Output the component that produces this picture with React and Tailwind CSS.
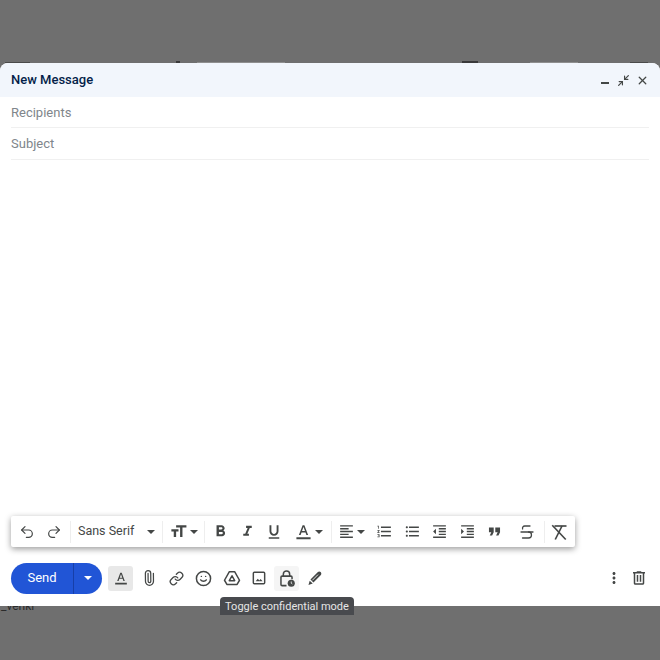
import React from "react";
import { Undo2, Redo2, Strikethrough, Paperclip, Link, Smile, Minimize2, X } from "lucide-react";

function Mi({ d, size = 18, className = "" }) {
  return (
    <svg width={size} height={size} viewBox="0 0 24 24" fill="currentColor" className={className}>
      <path d={d} />
    </svg>
  );
}

function Caret() {
  return <span className="w-0 h-0 border-x-[4px] border-x-transparent border-t-[4px] border-t-[#444746]" />;
}

function Divider() {
  return <span className="w-px h-[22px] bg-[#eeeeee]" />;
}

const paths = {
  size: "M9 4v3h5v12h3V7h5V4H9zm-6 8h3v7h3v-7h3V9H3v3z",
  bold: "M15.6 10.79c.97-.67 1.65-1.77 1.65-2.79 0-2.26-1.75-4-4-4H7v14h7.04c2.09 0 3.71-1.7 3.71-3.79 0-1.52-.86-2.82-2.15-3.42zM10 6.5h3c.83 0 1.5.67 1.5 1.5s-.67 1.5-1.5 1.5h-3v-3zm3.5 9H10v-3h3.5c.83 0 1.5.67 1.5 1.5s-.67 1.5-1.5 1.5z",
  italic: "M10 4v3h2.21l-3.42 8H6v3h8v-3h-2.21l3.42-8H18V4z",
  underline: "M12 17c3.31 0 6-2.69 6-6V3h-2.5v8c0 1.93-1.57 3.5-3.5 3.5S8.5 12.93 8.5 11V3H6v8c0 3.31 2.69 6 6 6zm-7 2v2h14v-2H5z",
  color: "M2 20h20v3H2v-3zm3.49-3h2.42l1.27-3.58h5.65L16.09 17h2.42L13.25 3h-2.5L5.49 17zm4.42-5.61 2.03-5.79h.12l2.03 5.79H9.91z",
  align: "M15 15H3v2h12v-2zm0-8H3v2h12V7zM3 13h18v-2H3v2zm0 8h18v-2H3v2zM3 3v2h18V3H3z",
  numbered: "M2 17h2v.5H3v1h1v.5H2v1h3v-4H2v1zm1-9h1V4H2v1h1v3zm-1 3h1.8L2 13.1v.9h3v-1H3.2L5 10.9V10H2v1zm5-6v2h14V5H7zm0 14h14v-2H7v2zm0-6h14v-2H7v2z",
  bulleted: "M4 10.5c-.83 0-1.5.67-1.5 1.5s.67 1.5 1.5 1.5 1.5-.67 1.5-1.5-.67-1.5-1.5-1.5zm0-6c-.83 0-1.5.67-1.5 1.5S3.17 7.5 4 7.5 5.5 6.83 5.5 6 4.83 4.5 4 4.5zm0 12c-.83 0-1.5.68-1.5 1.5s.68 1.5 1.5 1.5 1.5-.68 1.5-1.5-.67-1.5-1.5-1.5zM7 19h14v-2H7v2zm0-6h14v-2H7v2zm0-8v2h14V5H7z",
  outdent: "M11 17h10v-2H11v2zm-8-5l4 4V8l-4 4zm0 9h18v-2H3v2zM3 3v2h18V3H3zm8 6h10V7H11v2zm0 4h10v-2H11v2z",
  indent: "M3 21h18v-2H3v2zM3 8v8l4-4-4-4zm8 9h10v-2H11v2zM3 3v2h18V3H3zm8 6h10V7H11v2zm0 4h10v-2H11v2z",
  quote: "M6 17h3l2-4V7H5v6h3zm8 0h3l2-4V7h-6v6h3z",
  dots: "M12 8c1.1 0 2-.9 2-2s-.9-2-2-2-2 .9-2 2 .9 2 2 2zm0 2c-1.1 0-2 .9-2 2s.9 2 2 2 2-.9 2-2-.9-2-2-2zm0 6c-1.1 0-2 .9-2 2s.9 2 2 2 2-.9 2-2-.9-2-2-2z",
  trash: "M15 4V3H9v1H4v2h1v13c0 1.1.9 2 2 2h10c1.1 0 2-.9 2-2V6h1V4h-5zm2 15H7V6h10v13zM9 8h2v9H9zm4 0h2v9h-2z",
};

function FmtBtn({ children, w = "w-[27.5px]", gap = "gap-[3px]", extra = "" }) {
  return <span className={`${w} ${gap} ${extra} flex justify-center items-center text-[#444746]`}>{children}</span>;
}

function ActionBtn({ children, active }) {
  return (
    <span className="w-[27.7px] flex justify-center text-[#444746]">
      <span className={`w-[25px] h-[25px] flex justify-center items-center rounded-[3px] ${active || ""}`}>
        {children}
      </span>
    </span>
  );
}

export default function App() {
  return (
    <div className="w-[660px] h-[660px] bg-[#6f6f6f] overflow-hidden flex flex-col font-['Roboto',sans-serif]">
      {/* bits of the page behind the dialog, only the lowest pixels show */}
      <div className="h-[63px] shrink-0 flex items-end">
        <span className="ml-[5px] w-[25px] h-[1px] bg-[#4a4a4a]" />
        <span className="ml-[146px] w-[4px] h-[2px] bg-[#3a3a3a]" />
        <span className="ml-[17px] w-[88px] h-[1px] bg-[#8f8f8f]" />
        <span className="ml-[177px] w-[16px] h-[2px] bg-[#3a3a3a]" />
        <span className="ml-[52px] w-[48px] h-[1px] bg-[#8f8f8f]" />
        <span className="ml-[52px] w-[18px] h-[1px] bg-[#4a4a4a]" />
      </div>

      <div className="relative h-[543px] shrink-0 bg-white rounded-t-[8px] flex flex-col">
        <div className="h-[34px] shrink-0 bg-[#f2f6fc] rounded-t-[8px] flex items-center justify-between pl-[11px] pr-[11px]">
          <span className="text-[13px] font-medium text-[#041e49]">New Message</span>
          <div className="flex items-center text-[#444746]">
            <span className="w-[8px] h-[2px] bg-[#444746] mt-[6px] mr-[8px]" />
            <Minimize2 size={13} strokeWidth={2.2} className="mr-[6px]" />
            <X size={13} strokeWidth={2.4} />
          </div>
        </div>

        <div className="mx-[11px] h-[31px] shrink-0 border-b border-[#f0f0f0] flex items-center pt-[2px] text-[13px] text-[#80868b]">
          Recipients
        </div>
        <div className="mx-[11px] h-[32px] shrink-0 border-b border-[#f0f0f0] flex items-center text-[13px] text-[#80868b]">
          Subject
        </div>

        <div className="flex-1" />

        <div className="mx-[11px] w-[564px] h-[31px] shrink-0 bg-white rounded-[2px] shadow-[0_2px_6px_rgba(0,0,0,0.4)] flex items-center pl-[2px]">
          <FmtBtn><Undo2 size={16} strokeWidth={1.8} /></FmtBtn>
          <FmtBtn extra="mr-[2px]"><Redo2 size={16} strokeWidth={1.8} /></FmtBtn>
          <Divider />
          <span className="w-[91px] flex items-center justify-between px-[7px] text-[12.5px] text-[#444746]">
            Sans Serif
            <Caret />
          </span>
          <Divider />
          <FmtBtn w="w-[41px]" gap="gap-[2.5px]"><Mi d={paths.size} size={19} /><Caret /></FmtBtn>
          <Divider />
          <FmtBtn w="w-[27px]" extra="ml-[1.5px]"><Mi d={paths.bold} size={19} /></FmtBtn>
          <FmtBtn w="w-[27px]"><Mi d={paths.italic} size={17} /></FmtBtn>
          <FmtBtn w="w-[27px]"><Mi d={paths.underline} size={18} /></FmtBtn>
          <FmtBtn w="w-[43px]" gap="gap-[3.5px]"><Mi d={paths.color} size={17} /><Caret /></FmtBtn>
          <Divider />
          <FmtBtn w="w-[39.5px]" gap="gap-[2.5px]"><Mi d={paths.align} size={17} /><Caret /></FmtBtn>
          <FmtBtn><Mi d={paths.numbered} size={17} /></FmtBtn>
          <FmtBtn><Mi d={paths.bulleted} size={17} /></FmtBtn>
          <FmtBtn><Mi d={paths.outdent} size={17} /></FmtBtn>
          <FmtBtn><Mi d={paths.indent} size={17} /></FmtBtn>
          <FmtBtn><Mi d={paths.quote} size={19} /></FmtBtn>
          <FmtBtn w="w-[35px]" extra="pl-[1px]"><Strikethrough size={18} strokeWidth={1.7} /></FmtBtn>
          <Divider />
          <FmtBtn w="w-[30px]" extra="pr-[1px]">
            <svg width="18" height="18" viewBox="0 0 24 24" fill="none" stroke="currentColor" strokeWidth="2.2">
              <path d="M6 4h16" />
              <path d="M16 4 7 22" />
              <path d="M3 3l18 19" />
            </svg>
          </FmtBtn>
        </div>

        <div className="h-[59px] shrink-0 flex items-center pl-[11px] pr-[12px] pt-[3px]">
          <div className="w-[91px] h-[31px] rounded-full bg-[#2155d6] flex items-center text-white">
            <span className="w-[62px] text-center text-[13px]">Send</span>
            <span className="w-px h-full bg-[#173fa8]" />
            <span className="flex-1 flex justify-center">
              <span className="w-0 h-0 border-x-[4px] border-x-transparent border-t-[4px] border-t-white" />
            </span>
          </div>

          <div className="ml-[5px] flex items-center">
            <ActionBtn active="bg-[#e8e8e8]"><Mi d={paths.color} size={14} /></ActionBtn>
            <ActionBtn><Paperclip size={16} strokeWidth={1.9} className="rotate-[-45deg]" /></ActionBtn>
            <ActionBtn><Link size={15} strokeWidth={2.1} /></ActionBtn>
            <ActionBtn><Smile size={17} strokeWidth={2.1} /></ActionBtn>
            <ActionBtn>
              <svg width="18" height="18" viewBox="0 0 24 24" fill="none" stroke="currentColor" strokeWidth="2" strokeLinejoin="round">
                <path d="M8.500 3.500h7L22 15l-3.200 5.500H5.200L2 15z" />
                <path d="M12 9l3.600 6.500H8.400z" />
              </svg>
            </ActionBtn>
            <ActionBtn>
              <svg width="16" height="16" viewBox="0 0 24 24" fill="none" stroke="currentColor" strokeWidth="2.2">
                <rect x="3.500" y="3.500" width="17" height="17" rx="1.500" />
                <path d="M7 17l3.200-4 2.300 2.600 1.800-2.100L17.500 17z" fill="currentColor" stroke="none" />
              </svg>
            </ActionBtn>
            <ActionBtn active="bg-[#f5f5f5]">
              <svg width="19" height="19" viewBox="0 0 24 24" fill="none" stroke="currentColor" strokeWidth="1.900">
                <path d="M8 9V6.500a4 4 0 0 1 8 0V9" />
                <path d="M12 21H6.500A1.500 1.500 0 0 1 5 19.500V10.500A1.500 1.500 0 0 1 6.500 9h11A1.500 1.500 0 0 1 19 10.500V13" />
                <circle cx="18" cy="18" r="4.500" fill="currentColor" stroke="none" />
                <path d="M18 15.800V18l1.400 1" stroke="#ffffff" strokeWidth="1" />
              </svg>
            </ActionBtn>
            <ActionBtn>
              <svg width="17" height="17" viewBox="0 0 24 24" fill="currentColor">
                <path d="M20.700 2.800c-1.100-1.100-2.800-1.100-3.900 0L6.300 13.500l4.200 4.200L21 7c1-1.300 .800-3-.300-4.200zM5.200 15 3.500 21l6-1.800z" />
                <path d="M9 14.500l8-8" stroke="#ffffff" strokeWidth="1.200" />
              </svg>
            </ActionBtn>
          </div>

          <div className="ml-auto flex items-center gap-[7px] text-[#444746]">
            <Mi d={paths.dots} size={18} />
            <Mi d={paths.trash} size={18} />
          </div>
        </div>

        <div className="absolute left-[220px] top-[534px] w-[134px] h-[18px] pt-[2px] bg-[#484a4e] rounded-t-[4px] flex items-center justify-center text-[11px] text-[#e6e6e6] whitespace-nowrap">
          Toggle confidential mode
        </div>
      </div>

      <div className="pl-[1px] -mt-[6px] text-[12px] leading-[12px] text-[#2b2b2b]">_venki</div>
    </div>
  );
}
